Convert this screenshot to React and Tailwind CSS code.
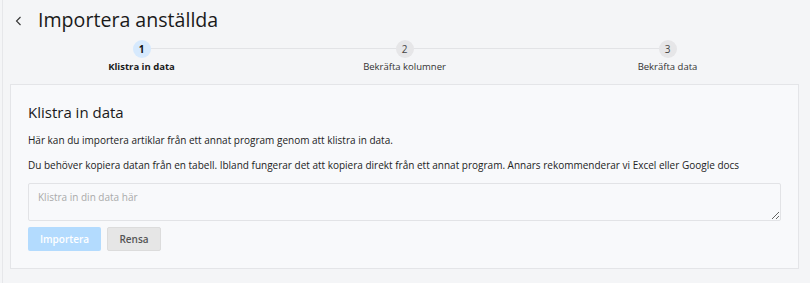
import React from "react";

const steps = [
  { n: 1, label: "Klistra in data", active: true },
  { n: 2, label: "Bekräfta kolumner" },
  { n: 3, label: "Bekräfta data" },
];

export default function App() {
  return (
    <div
      className="w-[810px] h-[283px] bg-[#f4f5f7] overflow-hidden pl-[2px]"
      style={{ fontFamily: '"Open Sans", "Noto Sans", sans-serif' }}
    >
      <div className="h-full border-l border-[#e6e7ea] pl-[7px] pr-[11px]">
        <div className="flex items-center h-[40px] pl-[5px]">
          <svg width="8" height="10" viewBox="0 0 8 10" className="mr-[15px] mt-[1px]">
            <path d="M5.5 1 L1.5 5 L5.5 9" fill="none" stroke="#333" strokeWidth="1.1" />
          </svg>
          <h1 className="text-[19.6px] leading-none text-[#1a1a1a]">Importera anställda</h1>
        </div>
        <div className="relative grid grid-cols-3 h-[44px]">
          <div className="absolute top-[8px] left-[16.67%] right-[16.67%] h-px bg-[#e2e3e6]" />
          {steps.map((s) => (
            <div key={s.n} className="relative flex flex-col items-center">
              <div
                className={
                  "w-[18px] h-[18px] rounded-full flex items-center justify-center text-[10px] " +
                  (s.active ? "bg-[#d6e9fd] text-[#111] font-bold" : "bg-[#e6e6e8] text-[#444]")
                }
              >
                {s.n}
              </div>
              <div
                className={
                  "mt-[4px] text-[9.5px] leading-none " +
                  (s.active ? "font-bold text-[#1a1a1a]" : "text-[#333]")
                }
              >
                {s.label}
              </div>
            </div>
          ))}
        </div>
        <div className="border border-[#e4e5e8] bg-[#f8f9fb] px-[17px] pt-[20px] h-[185px]">
          <h2 className="text-[15px] leading-none text-[#1a1a1a]">Klistra in data</h2>
          <p className="mt-[15px] text-[10px] leading-none text-[#222]">
            Här kan du importera artiklar från ett annat program genom att klistra in data.
          </p>
          <p className="mt-[15px] text-[10px] leading-none text-[#222]">
            Du behöver kopiera datan från en tabell. Ibland fungerar det att kopiera direkt från ett annat program. Annars rekommenderar vi Excel eller Google docs
          </p>
          <textarea
            placeholder="Klistra in din data här"
            className="block mt-[13px] w-[753px] h-[38px] border border-[#e2e3e6] rounded-[2px] bg-[#f8f9fb] px-[9px] py-[6px] text-[10px] placeholder:text-[#aaa] outline-none"
            style={{ fontFamily: '"Open Sans", sans-serif' }}
          />
          <div className="flex gap-[6px] mt-[6px]">
            <button className="w-[73px] h-[24px] rounded-[2px] bg-[#b3dbfe] text-white text-[10px] font-semibold">
              Importera
            </button>
            <button className="w-[54px] h-[24px] rounded-[2px] bg-[#e6e6e6] border border-[#dcdcdc] text-[#555] text-[10px] font-semibold">
              Rensa
            </button>
          </div>
        </div>
      </div>
    </div>
  );
}
